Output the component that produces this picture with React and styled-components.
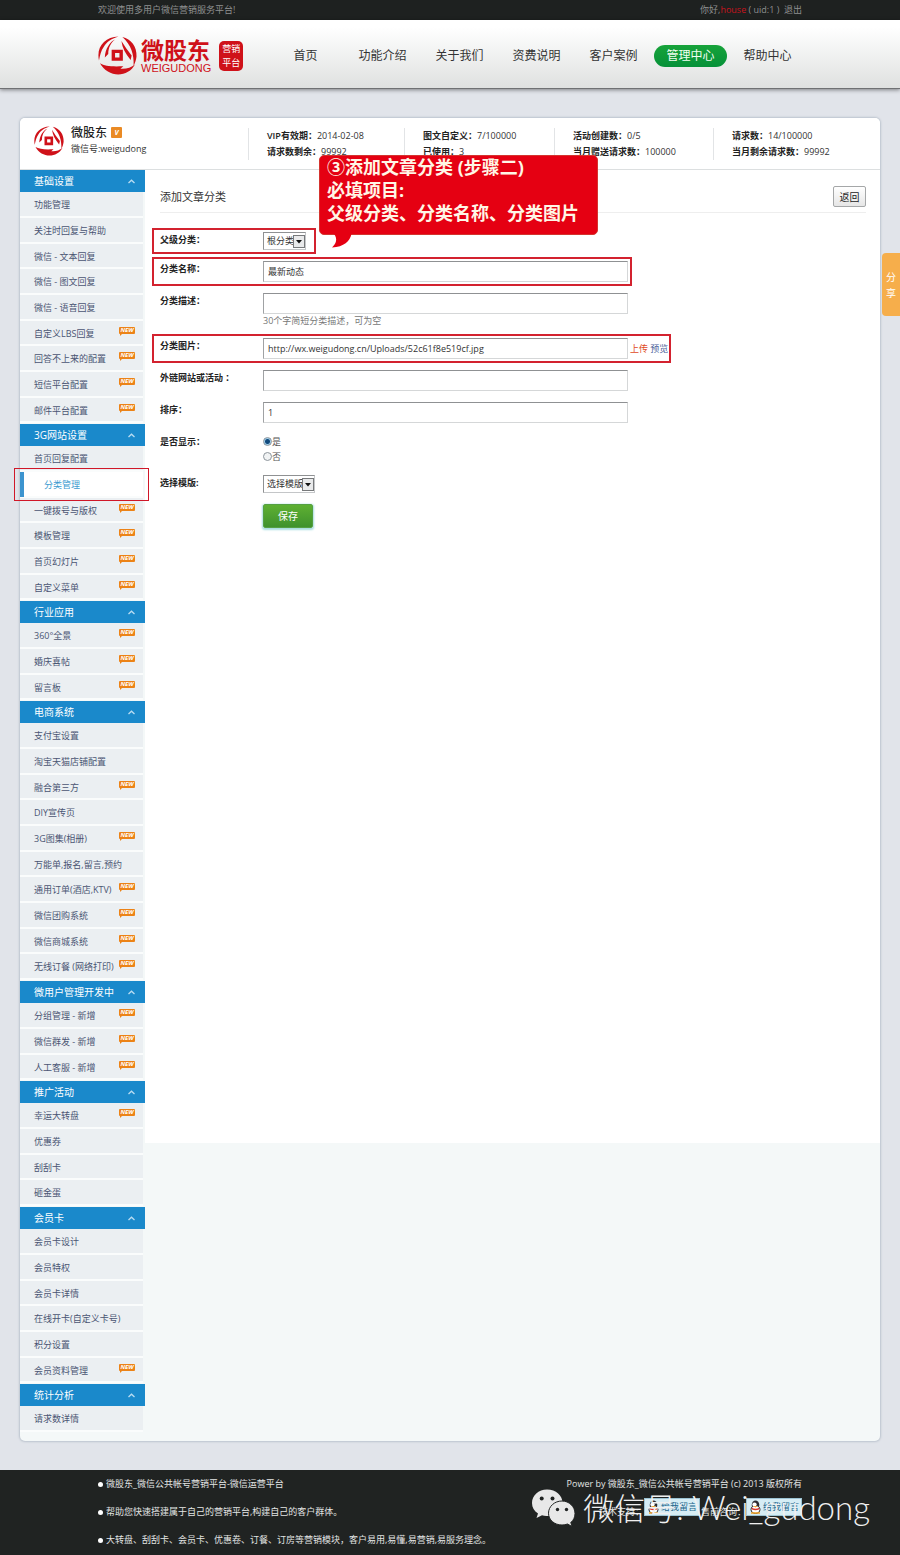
import React from "react";
import styled, { createGlobalStyle, css } from "styled-components";

const GlobalStyle = createGlobalStyle`
  *, *::before, *::after { box-sizing: border-box; }
  body {
    margin: 0;
    background: #e1e4ea;
    color: #333;
    font: 9px/16px "Open Sans", "Noto Sans CJK SC", sans-serif;
  }
  button, input, select { font: inherit; color: inherit; margin: 0; }
  a { color: inherit; text-decoration: none; }
  ul, h1, h2, p, dl, dd { margin: 0; padding: 0; list-style: none; }
  h1, h2 { font-weight: 400; }
`;

const Page = styled.div`
  position: relative;
`;

const Container = styled.div`
  display: flex;
  justify-content: space-between;
  max-width: 704px;
  margin: 0 auto;
`;

const TopBar = styled.div`
  background: #1e2120;
  color: #8e9090;
  line-height: 20px;
`;

const UserName = styled.span`
  color: #c8141e;
`;

const Header = styled.header`
  background: linear-gradient(#fff 10%, #dfe1e0);
  border-bottom: 1px solid #6f7173;
  box-shadow: 0 1px 4px rgba(0, 0, 0, 0.45);
`;

const HeaderInner = styled(Container)`
  align-items: center;
  height: 68px;
  padding-top: 3px;
`;

const Brand = styled.a`
  display: flex;
  align-items: center;
  color: #cf1119;
`;

const BrandText = styled.span`
  display: flex;
  flex-direction: column;
  margin-left: 4px;
`;

const BrandName = styled.span`
  font-size: 23px;
  font-weight: 700;
  line-height: 24px;
`;

const BrandLatin = styled.span`
  font: 11px/12px "Liberation Sans", sans-serif;
`;

const Stamp = styled.span`
  display: flex;
  flex-direction: column;
  width: 24px;
  margin-left: 8px;
  padding: 1px 0;
  border-radius: 5px;
  background: #cf1119;
  color: #fff;
  font-size: 9px;
  line-height: 14px;
  text-align: center;
`;

const Nav = styled.nav`
  display: flex;
  margin-right: -4px;
`;

const NavLink = styled.a`
  width: 73px;
  margin: 0 2px;
  border-radius: 11px;
  color: #333;
  font-size: 12px;
  line-height: 22px;
  text-align: center;
  ${(p) =>
    p.$active &&
    css`
      background: linear-gradient(#17a33a, #069139);
      color: #f2fff2;
    `}
`;

const Panel = styled.div`
  margin: 29px 20px;
  border-radius: 5px;
  background: #f4f8f8;
  box-shadow: 0 0 2px 1px #bcc4ce;
`;

const Account = styled.section`
  display: grid;
  grid-template-columns: 228fr 156fr 150fr 159fr 167fr;
  align-items: center;
  height: 52px;
  border-bottom: 1px solid #dcdfe0;
  border-radius: 5px 5px 0 0;
  background: #fff;
`;

const Identity = styled.div`
  display: flex;
  align-items: center;
  gap: 7px;
  padding: 0 0 6px 14px;
`;

const AccountName = styled.h1`
  display: flex;
  align-items: center;
  gap: 4px;
  color: #222;
  font-size: 12px;
  font-weight: 500;
`;

const Vip = styled.span`
  width: 11px;
  border-radius: 1px;
  background: #ea8a24;
  color: #fff;
  font: italic 700 7px/11px "Open Sans", sans-serif;
  text-align: center;
`;

const Stats = styled.dl`
  padding-left: 18px;
  border-left: 1px solid #e2e4e6;
`;

const Stat = styled.div`
  display: flex;
  white-space: nowrap;

  dt { font-weight: 600; color: #222; }
`;

const Body = styled.div`
  display: flex;
  align-items: flex-start;
`;

const Sidebar = styled.nav`
  flex: none;
  width: 125px;
  padding-bottom: 8px;
  color: #4a5573;
`;

const GroupButton = styled.button`
  display: flex;
  align-items: center;
  justify-content: space-between;
  width: 100%;
  height: 22px;
  padding: 0 10px 0 14px;
  border: 0;
  background: #1a89cb;
  color: #fff;
  font-size: 10px;
  cursor: pointer;
`;

const GroupList = styled.ul`
  padding: 0 2px 1px 0;
`;

const Item = styled.li`
  position: relative;
  height: 26px;
  border-bottom: 2px solid #fafcfc;
  background: #ebeff2;

  &:nth-child(3n) { height: 25px; }

  a {
    display: block;
    padding-left: 14px;
    line-height: 25px;
    white-space: nowrap;
  }

  ${(p) =>
    p.$active &&
    css`
      z-index: 1;
      background: #fff;
      color: #3c9bd0;

      a {
        border-left: 4px solid #3c94cf;
        padding-left: 20px;
      }

      &::after {
        content: "";
        position: absolute;
        inset: -4px -6px -5px -6px;
        border: 1px solid #d01728;
        pointer-events: none;
      }
    `}
`;

const NewTag = styled.span`
  position: absolute;
  top: 6px;
  right: 8px;
  width: 16px;
  border-radius: 1px;
  background: #ec8317;
  color: #fff;
  font: italic 700 6px/7px "Open Sans", sans-serif;
  text-align: center;

  &::after {
    content: "";
    position: absolute;
    left: 1px;
    top: 7px;
    border: 1px solid transparent;
    border-top-color: #ec8317;
    border-left-color: #ec8317;
  }
`;

const Main = styled.main`
  position: relative;
  flex: 1;
  min-height: 973px;
  padding: 16px 14px 0 15px;
  background: #fff;
`;

const TitleBar = styled.div`
  display: flex;
  align-items: center;
  justify-content: space-between;
  padding-bottom: 5px;
  border-bottom: 1px solid #eee;

  h2 { color: #333; font-size: 11px; }
`;

const BackButton = styled.button`
  width: 33px;
  height: 21px;
  padding: 0;
  border: 1px solid #a5a7a8;
  border-radius: 2px;
  background: linear-gradient(#fff, #e6e6e6);
  color: #222;
  font-size: 10px;
`;

const Form = styled.form`
  display: flex;
  flex-direction: column;
  align-items: flex-start;
  gap: 11px;
  padding-top: 19px;
`;

const Row = styled.div`
  position: relative;
  display: grid;
  grid-template-columns: 103px auto;
  align-items: start;

  ${(p) =>
    p.$marked &&
    css`
      &::after {
        content: "";
        position: absolute;
        inset: -4px -${p.$reach}px -4px -8px;
        border: 2px solid #d3222f;
        pointer-events: none;
      }
    `}
`;

const Label = styled.label`
  color: #222;
  font-weight: 700;
  white-space: nowrap;
`;

const Field = styled.div`
  display: flex;
  align-items: center;
  gap: 2px;
`;

const TextInput = styled.input`
  width: 365px;
  height: 21px;
  padding: 0 4px;
  border: 1px solid #d5d7d8;
  border-top-color: #8f9193;
  border-left-color: #a0a2a4;
  background: #fff;
`;

const Hint = styled.p`
  color: #777;
  line-height: 13px;
`;

const UploadLink = styled.a`
  color: ${(p) => (p.$hot ? "#e04a1c" : "#4d5f9a")};
`;

const SelectBox = styled.span`
  position: relative;
  display: block;
  width: ${(p) => p.$width}px;

  select {
    appearance: none;
    display: block;
    width: 100%;
    height: 18px;
    padding: 0 0 0 3px;
    border: 1px solid #c4c6c8;
    border-top-color: #8f9193;
    border-left-color: #8f9193;
    border-radius: 0;
    background: #fff;
    line-height: 16px;
  }

  svg {
    position: absolute;
    top: 3px;
    right: 1px;
    pointer-events: none;
  }
`;

const RadioLabel = styled.label`
  display: flex;
  align-items: center;
  line-height: 15px;
  color: #555;

  input {
    appearance: none;
    width: 9px;
    height: 9px;
    border: 1px solid #8d959c;
    border-radius: 50%;
    background: #f1f3f4;
  }

  input:checked {
    background: radial-gradient(#124a7c 0 2px, #9fd0ee 3px);
  }
`;

const SaveButton = styled.button`
  width: 50px;
  height: 24px;
  margin-left: 103px;
  padding: 0;
  border: 1px solid #55a043;
  border-radius: 2px;
  background: linear-gradient(#5eb032, #3f922d);
  box-shadow: 0 1px 2px 1px #a8dde0;
  color: #fff;
  font-size: 10px;
`;

const Callout = styled.aside`
  position: absolute;
  top: -15px;
  left: 174px;
  width: 279px;
  height: 80px;
  padding: 0 7px;
  border: 1px solid #d4342f;
  border-radius: 5px;
  background: #e50012;
  color: #fff6e6;
  font-size: 18px;
  font-weight: 700;
  line-height: 23px;
  white-space: nowrap;

  svg {
    position: absolute;
    top: 78px;
    left: 12px;
  }
`;

const ShareTab = styled.button`
  position: absolute;
  top: 253px;
  right: 0;
  width: 18px;
  height: 63px;
  padding: 0 4px;
  border: 0;
  border-radius: 4px 0 0 4px;
  background: #f6ae4b;
  color: #fff;
  font-size: 10px;
  line-height: 16px;
`;

const Footer = styled.footer`
  padding-bottom: 1px;
  background: #202322;
  color: #e3e5e4;
  line-height: 28px;
`;

const FooterInner = styled(Container)`
  position: relative;
  white-space: nowrap;
`;

const Points = styled.ul`
  li::before {
    content: "";
    display: inline-block;
    width: 5px;
    height: 5px;
    margin: 0 3px 1px 0;
    border-radius: 50%;
    background: #fff;
    vertical-align: middle;
  }
`;

const Support = styled.div`
  display: flex;
  flex-direction: column;
  align-items: flex-end;
`;

const SupportLine = styled.p`
  display: flex;
  align-items: center;
`;

const ChatLink = styled.a`
  display: flex;
  align-items: center;
  gap: 2px;
  width: 56px;
  height: 18px;
  margin: -10px 1px 0 0;
  padding-left: 3px;
  border: 1px solid #9cc3d3;
  background: #d6edf5;
  color: #22648a;

  &:last-child { margin-right: 0; }
`;

const Watermark = styled.div`
  position: absolute;
  top: 17px;
  right: -68px;
  display: flex;
  align-items: center;
  gap: 8px;
  color: #f0f0f0;
  font-family: "Lato", "Noto Sans CJK SC", sans-serif;
  font-size: 31px;
  font-weight: 300;
  line-height: 40px;
  pointer-events: none;
`;

const WatermarkId = styled.span`
  font-size: 33px;
`;

function Emblem({ size }) {
  return (
    <svg width={size} height={size} viewBox="0 0 40 40" fill="#cf1119" aria-hidden="true">
      <path d="M1 25C-2 11 7 1 21 .5C13 3 9 6 6 11C3 15 2 20 1 25Z" />
      <path d="M17.500 3.500C12 6 7.500 13 7 22L10.500 18.500C10.500 12 13 7 17.500 3.500Z" />
      <path d="M25 1C34 3 40 11 39.500 21C39 25 38 28 36.500 30C37 19 34 9 25 1Z" />
      <path d="M24 5C25 12 28 18 33.500 24.500L34.500 20C30.500 15 27 10 24 5Z" />
      <path d="M2 28C7 31 14 31.500 26 31L23 33.500C28 34 34 33 38 29C31 43 10 43 2 28Z" />
      <path fillRule="evenodd" d="M14 14H25.500V25.500H14ZM17.500 17.500V22H22V17.500Z" />
    </svg>
  );
}

function Chevron() {
  return (
    <svg width="7" height="5" viewBox="0 0 7 5" fill="none" stroke="#b9dcf2" strokeWidth="1.300" aria-hidden="true">
      <path d="M.5 4L3.500 1.200L6.500 4" />
    </svg>
  );
}

function Select({ id, width, children }) {
  return (
    <SelectBox $width={width}>
      <select id={id}>{children}</select>
      <svg width="12" height="13" viewBox="0 0 12 13" aria-hidden="true">
        <rect x=".5" y=".5" width="11" height="12" fill="#e9eaeb" stroke="#77797b" />
        <path d="M3 5H9L6 8.500Z" fill="#111" />
      </svg>
    </SelectBox>
  );
}

function Penguin() {
  return (
    <svg width="11" height="14" viewBox="0 0 11 14" aria-hidden="true">
      <ellipse cx="5.500" cy="5" rx="3.800" ry="4.500" fill="#2b2b30" />
      <ellipse cx="5.500" cy="9.500" rx="4.500" ry="4" fill="#fff" stroke="#2b2b30" />
      <ellipse cx="4.500" cy="4.500" rx="2.200" ry="2" fill="#fff" />
      <path d="M1.500 7.500Q5.500 10 9.500 7.500L9 9.500Q5.500 11 2 9.500Z" fill="#d9342b" />
      <path d="M3 6H8L5.500 7.500Z" fill="#f2a426" />
      <path d="M1 13H10" stroke="#f2a426" strokeWidth="1.500" />
    </svg>
  );
}

function ChatBubbles() {
  return (
    <svg width="43" height="38" viewBox="0 0 43 38" aria-hidden="true">
      <path fill="#e8e8e8" d="M15 .5C6.500 .5 0 6.500 0 14C0 18.500 2.200 22 6 24.500L4.500 29L10 26.300Q12.500 27.200 15.500 27C23.500 27 30.500 21 30.500 13.800C30.500 6.500 24 .5 15 .5Z" />
      <path fill="#e8e8e8" stroke="#202322" d="M30 12C22.500 12 16.500 17.500 16.500 24.200C16.500 31 22.500 36 30 36Q33 36 35.500 35L40 37.500L38.800 33.500C41.500 31.300 43 28.200 43 24.500C43 17.500 37 12 30 12Z" />
      <g fill="#202322">
        <circle cx="9.700" cy="9.500" r="2" />
        <circle cx="20.500" cy="9.500" r="2" />
        <circle cx="25.500" cy="20.500" r="1.700" />
        <circle cx="34.500" cy="20.500" r="1.700" />
      </g>
    </svg>
  );
}

const navItems = ["首页", "功能介绍", "关于我们", "资费说明", "客户案例", "管理中心", "帮助中心"];

const stats = [
  [["VIP有效期：", "2014-02-08"], ["请求数剩余：", "99992"]],
  [["图文自定义：", "7/100000"], ["已使用：", "3"]],
  [["活动创建数：", "0/5"], ["当月赠送请求数：", "100000"]],
  [["请求数：", "14/100000"], ["当月剩余请求数：", "99992"]],
];

// A trailing "*" marks an entry that carries the NEW tag.
const groups = [
  ["基础设置", ["功能管理", "关注时回复与帮助", "微信 - 文本回复", "微信 - 图文回复", "微信 - 语音回复", "自定义LBS回复*", "回答不上来的配置*", "短信平台配置*", "邮件平台配置*"]],
  ["3G网站设置", ["首页回复配置", "分类管理", "一键拨号与版权*", "模板管理*", "首页幻灯片*", "自定义菜单*"]],
  ["行业应用", ["360°全景*", "婚庆喜帖*", "留言板*"]],
  ["电商系统", ["支付宝设置", "淘宝天猫店铺配置", "融合第三方*", "DIY宣传页", "3G图集(相册)*", "万能单,报名,留言,预约", "通用订单(酒店,KTV)*", "微信团购系统*", "微信商城系统*", "无线订餐 (网络打印)*"]],
  ["微用户管理开发中", ["分组管理 - 新增*", "微信群发 - 新增*", "人工客服 - 新增*"]],
  ["推广活动", ["幸运大转盘*", "优惠券", "刮刮卡", "砸金蛋"]],
  ["会员卡", ["会员卡设计", "会员特权", "会员卡详情", "在线开卡(自定义卡号)", "积分设置", "会员资料管理*"]],
  ["统计分析", ["请求数详情"]],
];

export default function App() {
  return (
    <Page>
      <GlobalStyle />
      <TopBar>
        <Container>
          <span>欢迎使用多用户微信营销服务平台!</span>
          <span>
            你好,<UserName>house</UserName> ( uid:1 ) <a href="#logout">&nbsp;退出</a>
          </span>
        </Container>
      </TopBar>

      <Header>
        <HeaderInner>
          <Brand href="#home">
            <Emblem size={39} />
            <BrandText>
              <BrandName>微股东</BrandName>
              <BrandLatin>WEIGUDONG</BrandLatin>
            </BrandText>
            <Stamp>
              <span>营销</span>
              <span>平台</span>
            </Stamp>
          </Brand>
          <Nav>
            {navItems.map((name) => (
              <NavLink key={name} href="#nav" $active={name === "管理中心"}>
                {name}
              </NavLink>
            ))}
          </Nav>
        </HeaderInner>
      </Header>

      <Panel>
        <Account>
          <Identity>
            <Emblem size={30} />
            <div>
              <AccountName>
                微股东 <Vip>V</Vip>
              </AccountName>
              <p>微信号:weigudong</p>
            </div>
          </Identity>
          {stats.map((column) => (
            <Stats key={column[0][0]}>
              {column.map(([term, value]) => (
                <Stat key={term}>
                  <dt>{term}</dt>
                  <dd>{value}</dd>
                </Stat>
              ))}
            </Stats>
          ))}
        </Account>

        <Body>
          <Sidebar>
            {groups.map(([title, items]) => (
              <div key={title}>
                <GroupButton type="button">
                  {title}
                  <Chevron />
                </GroupButton>
                <GroupList>
                  {items.map((item) => (
                    <Item key={item} $active={item === "分类管理"}>
                      <a href="#menu">{item.replace("*", "")}</a>
                      {item.endsWith("*") && <NewTag>NEW</NewTag>}
                    </Item>
                  ))}
                </GroupList>
              </div>
            ))}
          </Sidebar>

          <Main>
            <TitleBar>
              <h2>添加文章分类</h2>
              <BackButton type="button">返回</BackButton>
            </TitleBar>

            <Form>
              <Row $marked $reach={10}>
                <Label htmlFor="parent">父级分类：</Label>
                <Select id="parent" width={43}>
                  <option>根分类</option>
                </Select>
              </Row>
              <Row $marked $reach={4}>
                <Label htmlFor="name">分类名称：</Label>
                <TextInput id="name" defaultValue="最新动态" />
              </Row>
              <Row>
                <Label htmlFor="description">分类描述：</Label>
                <div>
                  <Field>
                    <TextInput id="description" />
                  </Field>
                  <Hint>30个字简短分类描述，可为空</Hint>
                </div>
              </Row>
              <Row $marked $reach={3}>
                <Label htmlFor="image">分类图片：</Label>
                <Field>
                  <TextInput id="image" defaultValue="http://wx.weigudong.cn/Uploads/52c61f8e519cf.jpg" />
                  <span>
                    <UploadLink href="#upload" $hot>上传</UploadLink>{" "}
                    <UploadLink href="#preview">预览</UploadLink>
                  </span>
                </Field>
              </Row>
              <Row>
                <Label htmlFor="link">外链网站或活动 ：</Label>
                <TextInput id="link" />
              </Row>
              <Row>
                <Label htmlFor="order">排序：</Label>
                <TextInput id="order" defaultValue="1" />
              </Row>
              <Row role="radiogroup" aria-labelledby="visible">
                <Label as="span" id="visible">是否显示：</Label>
                <div>
                  <RadioLabel>
                    <input type="radio" name="visible" defaultChecked />是
                  </RadioLabel>
                  <RadioLabel>
                    <input type="radio" name="visible" />否
                  </RadioLabel>
                </div>
              </Row>
              <Row>
                <Label htmlFor="template">选择模版:</Label>
                <Select id="template" width={52}>
                  <option>选择模版</option>
                </Select>
              </Row>
              <SaveButton type="submit">保存</SaveButton>
            </Form>

            <Callout>
              <p>③添加文章分类 (步骤二)</p>
              <p>必填项目:</p>
              <p>父级分类、分类名称、分类图片</p>
              <svg width="20" height="14" viewBox="0 0 20 14" fill="#e50012" aria-hidden="true">
                <path d="M2 0H19.500C18 7 12 13 0 13.500C4 10 6 5 2 0Z" />
              </svg>
            </Callout>
          </Main>
        </Body>
      </Panel>

      <ShareTab type="button">分享</ShareTab>

      <Footer>
        <FooterInner>
          <Points>
            <li>微股东_微信公共帐号营销平台-微信运营平台</li>
            <li>帮助您快速搭建属于自己的营销平台,构建自己的客户群体。</li>
            <li>大转盘、刮刮卡、会员卡、优惠卷、订餐、订房等营销模块，客户易用,易懂,易营销,易服务理念。</li>
          </Points>
          <Support>
            <p>Power by 微股东_微信公共帐号营销平台 (c) 2013 版权所有</p>
            <SupportLine>
              技术支持：
              <ChatLink href="#support"><Penguin />给我留言</ChatLink>
              售前咨询：
              <ChatLink href="#sales"><Penguin />给我留言</ChatLink>
            </SupportLine>
          </Support>
          <Watermark>
            <ChatBubbles />
            <span>
              微信号: <WatermarkId>Wei_gudong</WatermarkId>
            </span>
          </Watermark>
        </FooterInner>
      </Footer>
    </Page>
  );
}
